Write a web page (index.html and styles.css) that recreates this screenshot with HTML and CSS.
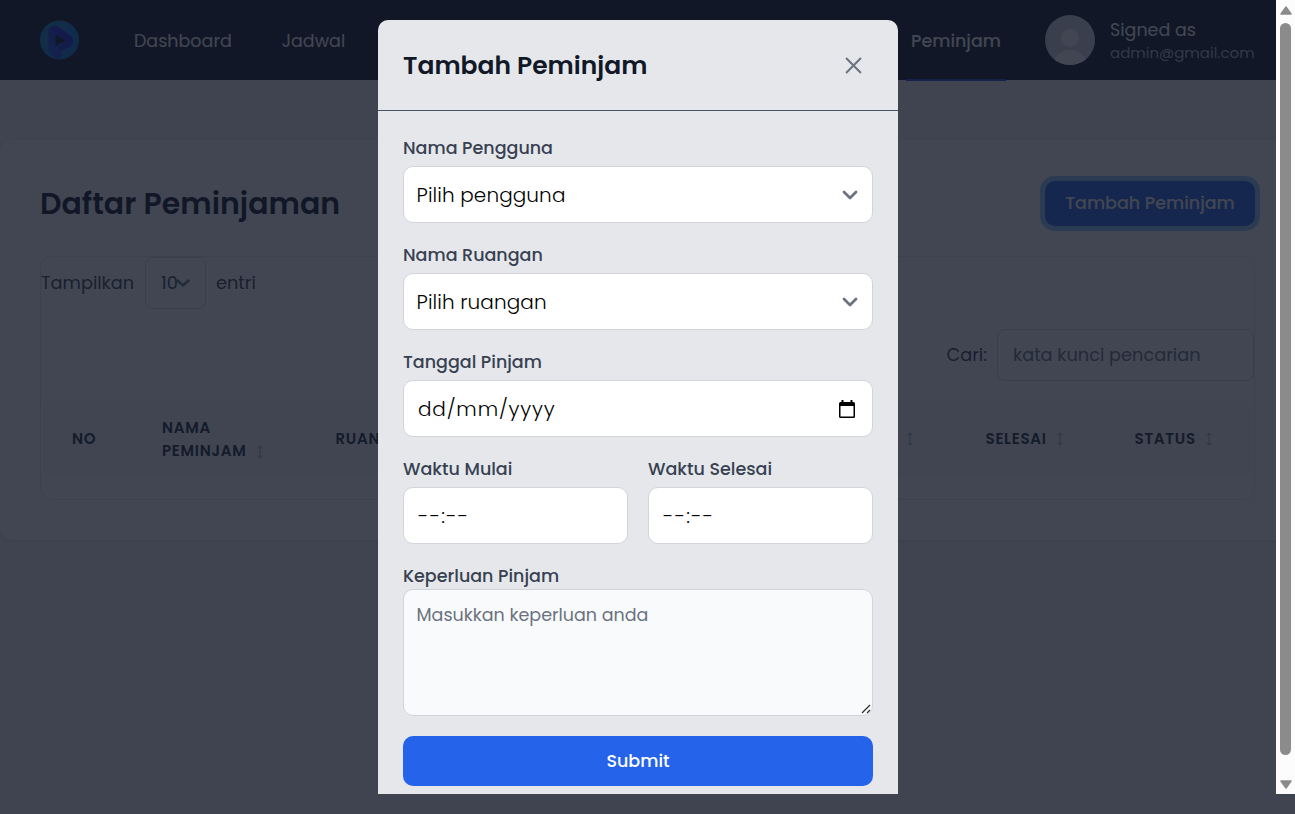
FILE: index.html
```html
<!DOCTYPE html>
<html lang="id">
<head>
<meta charset="utf-8">
<title>Daftar Peminjaman</title>
<link rel="stylesheet" href="styles.css">
</head>
<body>
<div class="page">
  <header class="navbar">
    <svg class="logo" viewBox="0 0 39 40">
      <defs>
        <linearGradient id="disc" x1="0" y1="0" x2="1" y2="1"><stop offset="0" stop-color="#128aa8"/><stop offset=".5" stop-color="#0e7ee0"/><stop offset="1" stop-color="#0d78d0"/></linearGradient>
        <linearGradient id="fold" x1="0" y1="1" x2="1" y2="0"><stop offset="0" stop-color="#1d50e0"/><stop offset="1" stop-color="#2414d8"/></linearGradient>
      </defs>
      <circle cx="19.500" cy="20" r="19.500" fill="url(#disc)"/>
      <path d="M20.500 28L28 24Q31 21.500 28 18.500L16.500 10Q12 8 12 13V27Q12 33 18 35" fill="none" stroke="url(#fold)" stroke-width="7.500" stroke-linecap="round" stroke-linejoin="round"/>
      <path d="M15.500 14.500L26.500 21L20 23.500Q16 25.500 15.500 28Z" fill="#111827"/>
    </svg>
    <nav class="menu">
      <a>Dashboard</a>
      <a>Jadwal</a>
    </nav>
    <a class="current"><span>Peminjam</span></a>
    <svg class="avatar" viewBox="0 0 50 50">
      <clipPath id="round"><circle cx="25" cy="25" r="25"/></clipPath>
      <g clip-path="url(#round)"><rect width="50" height="50" fill="#d8dade"/><circle cx="25" cy="23" r="9" fill="#fff"/><circle cx="25" cy="53" r="18" fill="#fff"/></g>
    </svg>
    <div class="account"><span class="signed">Signed as</span><span class="mail">admin@gmail.com</span></div>
  </header>

  <main class="card">
    <div class="card-head">
      <h1 class="title">Daftar Peminjaman</h1>
      <button class="add">Tambah Peminjam</button>
    </div>
    <section class="table-box">
      <div class="length">
        <span class="show">Tampilkan</span>
        <span class="length-select"><span>10</span><svg viewBox="0 0 14 8"><path d="M1.500 1.500L7 6.500L12.500 1.500"/></svg></span>
        <span>entri</span>
      </div>
      <div class="search"><span>Cari:</span><span class="search-input">kata kunci pencarian</span></div>
      <div class="thead">
        <div class="th"><span>NO</span></div>
        <div class="th two"><span>NAMA<br>PEMINJAM</span><svg class="sort" viewBox="0 0 6 14"><path d="M3 1V13M.5 3.500L3 .8L5.500 3.500M.5 10.500L3 13.200L5.500 10.500"/></svg></div>
        <div class="th"><span>RUANGAN</span></div>
        <div class="th"><span>TANGGAL</span></div>
        <div class="th"><span>MULAI</span><svg class="sort" viewBox="0 0 6 14"><path d="M3 1V13M.5 3.500L3 .8L5.500 3.500M.5 10.500L3 13.200L5.500 10.500"/></svg></div>
        <div class="th"><span>SELESAI</span><svg class="sort" viewBox="0 0 6 14"><path d="M3 1V13M.5 3.500L3 .8L5.500 3.500M.5 10.500L3 13.200L5.500 10.500"/></svg></div>
        <div class="th"><span>STATUS</span><svg class="sort" viewBox="0 0 6 14"><path d="M3 1V13M.5 3.500L3 .8L5.500 3.500M.5 10.500L3 13.200L5.500 10.500"/></svg></div>
      </div>
    </section>
  </main>
</div>

<div class="overlay">
  <form class="modal">
    <div class="modal-head"><h2>Tambah Peminjam</h2><svg class="close" viewBox="0 0 16 16"><path d="M1 1L15 15M15 1L1 15"/></svg></div>
    <div class="modal-body">
      <div class="field"><label>Nama Pengguna</label><div class="control"><span>Pilih pengguna</span><svg class="chev" viewBox="0 0 16 10"><path d="M2 2L8 8L14 2"/></svg></div></div>
      <div class="field"><label>Nama Ruangan</label><div class="control"><span>Pilih ruangan</span><svg class="chev" viewBox="0 0 16 10"><path d="M2 2L8 8L14 2"/></svg></div></div>
      <div class="field"><label>Tanggal Pinjam</label><div class="control dt"><span>dd/mm/yyyy</span><svg class="cal" viewBox="0 0 16 18"><path d="M2.500 0H4.500V2H11.500V0H13.500V2H14.500Q16 2 16 3.500V16.500Q16 18 14.500 18H1.500Q0 18 0 16.500V3.500Q0 2 1.500 2H2.500ZM1.500 6V16.500H14.500V6Z" fill-rule="evenodd"/></svg></div></div>
      <div class="pair">
        <div class="field"><label>Waktu Mulai</label><div class="control dt time"><span>--:--</span></div></div>
        <div class="field"><label>Waktu Selesai</label><div class="control dt time"><span>--:--</span></div></div>
      </div>
      <div class="field area-field"><label>Keperluan Pinjam</label><div class="area"><span>Masukkan keperluan anda</span><svg class="grip" viewBox="0 0 10 10"><path d="M1 9L9 1M6 9L9 6"/></svg></div></div>
      <div class="submit"><span>Submit</span></div>
    </div>
  </form>
  <div class="scrollbar"><svg viewBox="0 0 12 9"><path d="M6 1L11 8H1Z"/></svg><div class="thumb"></div><svg viewBox="0 0 12 9"><path d="M1 1H11L6 8Z"/></svg></div>
</div>
</body>
</html>
```
FILE: styles.css
```css
*{box-sizing:border-box;margin:0;padding:0}
body{font-family:Poppins,Inter,sans-serif;background:#f3f4f6;overflow:hidden;color:#374151;font-size:17.5px;line-height:24px}
.page{width:1276px;height:814px;overflow:hidden}
.page,.overlay{white-space:nowrap}
.navbar{height:80px;background:#111827;display:flex;align-items:center;padding-left:40px;color:#fff}
.logo{width:39px;height:40px}
.menu{display:flex;gap:50px;margin-left:55px;width:772px;padding-top:2px}
.current{width:100px;height:81px;display:flex;align-items:center;padding:3px 0 0 5px;border-bottom:2px solid #2848d8;margin-top:1px;font-weight:500}
.avatar{width:50px;height:50px;margin-left:39px}
.account{display:flex;flex-direction:column;margin-left:15px;padding-top:3px}
.signed{line-height:22px}
.mail{font-size:15px;line-height:23px;color:#b4bac4}
.card{margin-top:60px;height:400px;background:#fff;border-radius:12px 0 0 12px;padding:40px 21px 0 40px;box-shadow:0 1px 3px #0002}
.card-head{display:flex;justify-content:space-between;height:46px;align-items:center}
.title{font-size:30px;font-weight:600;color:#111827;padding-top:2px}
.add{width:210px;height:45px;border:0;border-radius:10px;background:#2563eb;color:#fff;box-shadow:0 0 0 5px #93c5fd;font:500 17.5px Poppins,Inter,sans-serif}
.table-box{margin-top:30px;height:244px;border:1px solid #e5e7eb;border-radius:12px;font-size:17.75px}
.length{display:flex;align-items:center;height:52px}
.show{width:104px}
.length-select{width:61px;height:52px;border:1px solid #d1d5db;border-radius:8px;padding-left:15px;display:flex;align-items:center;margin-right:10px}
.length-select svg{width:14px;height:8px;fill:none;stroke:#6b7280;stroke-width:2.4;stroke-linecap:round;margin-left:-2px}
.search{display:flex;align-items:center;justify-content:flex-end;gap:10px;margin-top:20px}
.search-input{width:257px;height:52px;border:1px solid #d1d5db;border-radius:8px;padding-left:15px;display:flex;align-items:center;color:#6b7280}
.thead{margin:19px 2px 0;height:76px;background:#f9fafb;border-radius:6px;display:grid;grid-template-columns:90px 173.5px 160px 352px 138px 149px 1fr;padding:1px 0 0 29px;align-items:center;font-size:15px;font-weight:600;line-height:23px;color:#1f2937;letter-spacing:.75px}
.th{display:flex;align-items:center;gap:10px}
.th.two{align-items:flex-end}
.th.two .sort{margin-bottom:3px}
.sort{width:6px;height:14px;fill:none;stroke:#9ca3af}
.overlay{position:fixed;inset:0;background:rgba(17,24,39,.8)}
.modal{position:absolute;left:378px;top:20px;width:520px;height:774px;background:#e5e7eb;border-radius:10px 10px 0 0}
.modal-head{height:91px;border-bottom:1px solid #475569;display:flex;align-items:center;justify-content:space-between;padding:1px 36px 0 25px}
.modal-head h2{font-size:25px;font-weight:600;color:#111827}
.close{width:17px;height:17px;fill:none;stroke:#6b7280;stroke-width:1.9}
.modal-body{padding:25px 25px 0;display:flex;flex-direction:column;gap:20px}
.field{display:flex;flex-direction:column;gap:6px}
label{height:24px;font-weight:500}
.control{height:57px;background:#fff;border:1px solid #d1d5db;border-radius:10px;display:flex;align-items:center;justify-content:space-between;padding:0 14.5px 0 12.5px;font-size:20px;font-weight:300;letter-spacing:.1px;color:#000}
.chev{width:16px;height:10px;fill:none;stroke:#6b7280;stroke-width:2.8;stroke-linecap:round;stroke-linejoin:round}
.control.dt{padding-left:14px;padding-right:17px;letter-spacing:.85px}
.control.time{letter-spacing:1.25px}
.cal{width:16px;height:18px}
.pair{display:grid;grid-template-columns:225px 225px;gap:20px}
.area-field{gap:1px}
.area{position:relative;height:127px;background:#f9fafb;border:1px solid #d1d5db;border-radius:10px;padding:13px 12.5px;color:#6b7280}
.grip{position:absolute;right:1px;bottom:1px;width:10px;height:10px;fill:none;stroke:#333;stroke-width:1.3}
.submit{height:50px;border-radius:10px;background:#2563eb;color:#fff;display:flex;align-items:center;justify-content:center;font-weight:500}
.scrollbar{position:absolute;right:0;top:0;width:19px;height:794px;background:#fcfcfc;display:flex;flex-direction:column;align-items:center;padding:6px 0 5px}
.scrollbar svg{width:12px;height:9px;fill:#8b8b8b;stroke:#8b8b8b;stroke-width:1.5;stroke-linejoin:round}
.thumb{width:11px;height:732px;border-radius:6px;background:#8b8b8b;margin:8px 0 25px}
```
